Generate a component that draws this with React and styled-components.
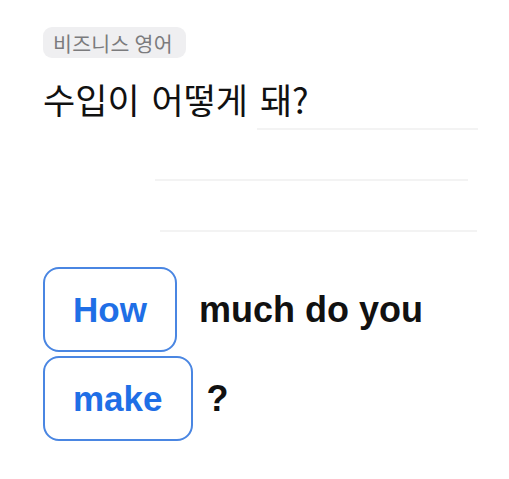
import React from "react";
import styled, { createGlobalStyle } from "styled-components";

const Global = createGlobalStyle`
  html, body { margin: 0; padding: 0; background: #ffffff; }
  body { font-family: "Liberation Sans", "Noto Sans CJK KR", sans-serif; }
`;

const Page = styled.div`
  width: 509px;
  height: 479px;
  box-sizing: border-box;
  padding: 27px 0 0 43px;
  display: flex;
  flex-direction: column;
  align-items: flex-start;
`;

const Tag = styled.div`
  height: 31px;
  padding: 0 13px 0 10px;
  border-radius: 9px;
  background: #efeff1;
  color: #7b7b7d;
  font-family: "Noto Sans CJK KR", sans-serif;
  font-size: 20.5px;
  letter-spacing: 0.3px;
  display: flex;
  align-items: center;
`;

const Title = styled.h1`
  margin: 19px 0 0 0;
  font-family: "Noto Sans CJK KR", sans-serif;
  font-weight: 400;
  font-size: 35px;
  line-height: 44px;
  word-spacing: 4px;
  color: #111111;
`;

const Rules = styled.div`
  margin-top: 7px;
  display: flex;
  flex-direction: column;
  gap: 49px;
`;

const Rule = styled.div`
  height: 2px;
  margin-left: ${(p) => p.$left}px;
  width: ${(p) => p.$width}px;
  background: #f3f3f3;
`;

const Sentence = styled.div`
  margin-top: 35px;
  width: 440px;
  display: flex;
  flex-wrap: wrap;
  align-items: baseline;
  row-gap: 2px;
`;

const Chip = styled.div`
  box-sizing: border-box;
  height: 85px;
  padding: 0 28px;
  border: 2px solid #4a86e2;
  border-radius: 16px;
  display: flex;
  align-items: center;
  color: #1f6fe6;
  font-weight: 700;
  font-size: 35px;
`;

const Word = styled.span`
  padding-left: ${(p) => p.$gap}px;
  font-weight: 700;
  font-size: 36px;
  color: #111111;
`;

const Break = styled.div`
  flex-basis: 100%;
  height: 0;
`;

export default function App() {
  const rules = [
    { left: 214, width: 221 },
    { left: 112, width: 313 },
    { left: 117, width: 317 },
  ];
  return (
    <>
      <Global />
      <Page>
        <Tag>비즈니스 영어</Tag>
        <Title>수입이 어떻게 돼?</Title>
        <Rules>
          {rules.map((r, i) => (
            <Rule key={i} $left={r.left} $width={r.width} />
          ))}
        </Rules>
        <Sentence>
          <Chip>How</Chip>
          <Word $gap={22}>much do you</Word>
          <Break />
          <Chip>make</Chip>
          <Word $gap={14}>?</Word>
        </Sentence>
      </Page>
    </>
  );
}
